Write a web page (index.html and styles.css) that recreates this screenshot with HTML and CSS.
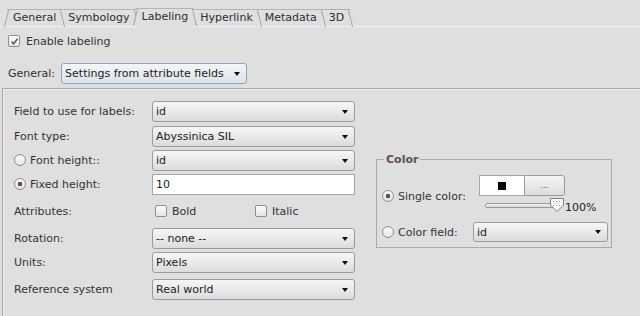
FILE: index.html
```html
<!DOCTYPE html>
<html lang="en">
<head>
    <meta charset="UTF-8">
    <title>Layer Properties - Labeling</title>
    <link rel="stylesheet" href="styles.css">
</head>
<body>
    <div class="tabs">
        <div class="tab first">General</div>
        <div class="tab">Symbology</div>
        <div class="tab active">Labeling</div>
        <div class="tab">Hyperlink</div>
        <div class="tab">Metadata</div>
        <div class="tab">3D</div>
    </div>

    <div class="page">
        <div class="enable">
            <span class="check checked">
                <svg width="9" height="9" viewBox="0 0 9 9"><path d="M1.5 4.5 L3.6 6.8 L7.6 1.8" fill="none" stroke="#555" stroke-width="1.4"/></svg>
            </span>
            <span>Enable labeling</span>
        </div>

        <div class="general-row">
            <span>General:</span>
            <div class="combo focus wide">
                <span>Settings from attribute fields</span>
                <span class="arrow"></span>
            </div>
        </div>

        <div class="frame">
            <div class="form">
                <div class="row first-row">
                    <span class="label">Field to use for labels:</span>
                    <div class="combo"><span>id</span><span class="arrow"></span></div>
                </div>
                <div class="row">
                    <span class="label">Font type:</span>
                    <div class="combo"><span>Abyssinica SIL</span><span class="arrow"></span></div>
                </div>
                <div class="row">
                    <span class="label"><span class="radio"></span>Font height::</span>
                    <div class="combo"><span>id</span><span class="arrow"></span></div>
                </div>
                <div class="row gap-input">
                    <span class="label"><span class="radio checked"></span>Fixed height:</span>
                    <div class="input">10</div>
                </div>
                <div class="row attrs">
                    <span class="label">Attributes:</span>
                    <div class="attr-list">
                        <span class="attr"><span class="check"></span>Bold</span>
                        <span class="attr"><span class="check"></span>Italic</span>
                    </div>
                </div>
                <div class="row">
                    <span class="label">Rotation:</span>
                    <div class="combo"><span>-- none --</span><span class="arrow"></span></div>
                </div>
                <div class="row units">
                    <span class="label">Units:</span>
                    <div class="combo"><span>Pixels</span><span class="arrow"></span></div>
                </div>
                <div class="row">
                    <span class="label">Reference system</span>
                    <div class="combo"><span>Real world</span><span class="arrow"></span></div>
                </div>
            </div>

            <fieldset class="color-group">
                <legend>Color</legend>
                <div class="color-row">
                    <span class="color-label single"><span class="radio checked"></span>Single color:</span>
                    <div class="color-stack">
                        <div class="color-pick">
                            <span class="swatch"><span class="chip"></span></span>
                            <span class="more">...</span>
                        </div>
                        <div class="slider">
                            <span class="track"></span>
                            <svg class="handle" width="16" height="16" viewBox="0 0 16 16">
                                <path d="M1.5 1.5 H14.5 V8 L8 14.5 L1.5 8 Z" fill="#fafafa" stroke="#808080"/>
                                <g fill="#9a9a9a">
                                    <rect x="4" y="4" width="1" height="1"/><rect x="7" y="4" width="1" height="1"/><rect x="10" y="4" width="1" height="1"/>
                                    <rect x="5.5" y="6" width="1" height="1"/><rect x="8.5" y="6" width="1" height="1"/>
                                    <rect x="4" y="8" width="1" height="1"/><rect x="7" y="8" width="1" height="1"/><rect x="10" y="8" width="1" height="1"/>
                                </g>
                            </svg>
                            <span class="pct">100%</span>
                        </div>
                    </div>
                </div>
                <div class="color-row field">
                    <span class="color-label"><span class="radio"></span>Color field:</span>
                    <div class="combo small"><span>id</span><span class="arrow"></span></div>
                </div>
            </fieldset>
        </div>
    </div>
</body>
</html>
```

FILE: styles.css
```css
body {
    margin: 0;
    width: 640px;
    height: 316px;
    overflow: hidden;
    background: #dfdfdf;
    font-family: "DejaVu Sans", sans-serif;
    font-size: 11px;
    color: #333;
}
.tabs {
    display: flex;
    height: 17px;
    padding: 9px 0 0 7px;
    border-bottom: 1px solid #f2f2f2;
}
.tab {
    position: relative;
    padding: 0 6px;
    line-height: 16px;
    border-top: 1px solid #b4b4b4;
    color: #2e2e2e;
}
.tab::after {
    content: '';
    position: absolute;
    right: -1px;
    top: 0;
    height: 17px;
    border-right: 1px solid #a4a4a4;
    transform: skewX(14deg);
}
.tab.first::before,
.tab.active::before {
    content: '';
    position: absolute;
    left: -1px;
    top: 0;
    height: 17px;
    border-left: 1px solid #a4a4a4;
    transform: skewX(-14deg);
}
.tab.active {
    margin-top: -1px;
    height: 18px;
    margin-bottom: -1px;
    background: #dfdfdf;
    z-index: 1;
}
.page {
    padding: 0;
}
.enable {
    display: flex;
    align-items: center;
    gap: 6px;
    margin: 8px 0 0 8px;
    height: 12px;
}
.check {
    display: inline-flex;
    align-items: center;
    justify-content: center;
    box-sizing: border-box;
    width: 12px;
    height: 12px;
    border: 1px solid #8e8e8e;
    border-radius: 2px;
    background: linear-gradient(#fdfdfd, #e4e4e4);
}
.radio {
    display: inline-block;
    box-sizing: border-box;
    width: 12px;
    height: 12px;
    margin-right: 4px;
    border: 1px solid #8e8e8e;
    border-radius: 50%;
    background: linear-gradient(#fdfdfd, #e4e4e4);
    vertical-align: -2px;
}
.radio.checked {
    background: radial-gradient(circle, #555 2px, transparent 2.6px), linear-gradient(#fdfdfd, #e4e4e4);
}
.general-row {
    display: flex;
    align-items: center;
    gap: 6px;
    margin: 16px 0 0 8px;
}
.combo {
    display: flex;
    align-items: center;
    justify-content: space-between;
    box-sizing: border-box;
    height: 20px;
    padding: 0 6px 0 3px;
    border: 1px solid #9b9b9b;
    border-radius: 3px;
    background: linear-gradient(#f6f6f6, #dcdcdc);
    color: #222;
}
.combo.focus {
    border-color: #8ea3bf;
    background: linear-gradient(#f4f6f9, #dde3ea);
}
.combo.wide {
    width: 186px;
    height: 21px;
}
.arrow {
    width: 0;
    height: 0;
    border-left: 3.5px solid transparent;
    border-right: 3.5px solid transparent;
    border-top: 4px solid #111;
}
.frame {
    display: flex;
    margin: 4px 0 0 2px;
    height: 240px;
    border-top: 1px solid #a9a9a9;
    border-left: 1px solid #a9a9a9;
    box-shadow: inset 1px 1px 0 #eeeeee;
}
.form {
    padding: 12px 0 0 11px;
}
.row {
    display: grid;
    grid-template-columns: 138px 203px;
    align-items: center;
    height: 21px;
    margin-bottom: 3px;
}
.row.first-row {
    margin-bottom: 4px;
}
.row .combo {
    height: 21px;
}
.label {
    color: #333;
}
.row.gap-input {
    margin-top: 3px;
}
.input {
    box-sizing: border-box;
    height: 21px;
    padding: 3px 3px;
    border: 1px solid #a5a5a5;
    background: #fff;
    color: #222;
}
.row.attrs {
    margin: 8px 0 9px;
    height: 16px;
}
.attr-list {
    display: flex;
    padding-left: 3px;
}
.attr {
    display: flex;
    align-items: center;
    gap: 5px;
    width: 101px;
}
.row.units {
    margin-bottom: 6px;
}
.color-group {
    align-self: flex-start;
    box-sizing: border-box;
    width: 236px;
    margin: 64px 0 0 21px;
    padding: 9px 3px 5px 5px;
    border: 1px solid #aaa;
}
.color-group legend {
    padding: 0 2px;
    margin-left: 2px;
    font-weight: bold;
    color: #5a5252;
}
.color-row {
    display: flex;
    align-items: center;
}
.color-label {
    width: 97px;
    padding-top: 4px;
}
.color-row.field {
    margin-top: 9px;
}
.color-row.field .color-label {
    width: 91px;
    padding-top: 0;
}
.combo.small {
    width: 135px;
}
.color-pick {
    display: flex;
    height: 21px;
}
.swatch {
    display: flex;
    align-items: center;
    justify-content: center;
    box-sizing: border-box;
    width: 45px;
    border: 1px solid #a5a5a5;
    border-right: none;
    background: #fff;
}
.chip {
    width: 8px;
    height: 8px;
    background: #000;
}
.more {
    display: flex;
    align-items: center;
    justify-content: center;
    box-sizing: border-box;
    width: 41px;
    border: 1px solid #9b9b9b;
    border-radius: 0 3px 3px 0;
    background: linear-gradient(#f6f6f6, #dcdcdc);
    font-size: 8px;
    color: #555;
}
.slider {
    display: flex;
    align-items: center;
    margin: 1px 0 0 6px;
    height: 16px;
}
.track {
    box-sizing: border-box;
    width: 72px;
    height: 5px;
    border: 1px solid #9c9c9c;
    border-radius: 2px;
    background: linear-gradient(#f0f0f0, #dadada);
}
.handle {
    margin-left: -8px;
}
.pct {
    margin-top: 4px;
    color: #222;
}
```
